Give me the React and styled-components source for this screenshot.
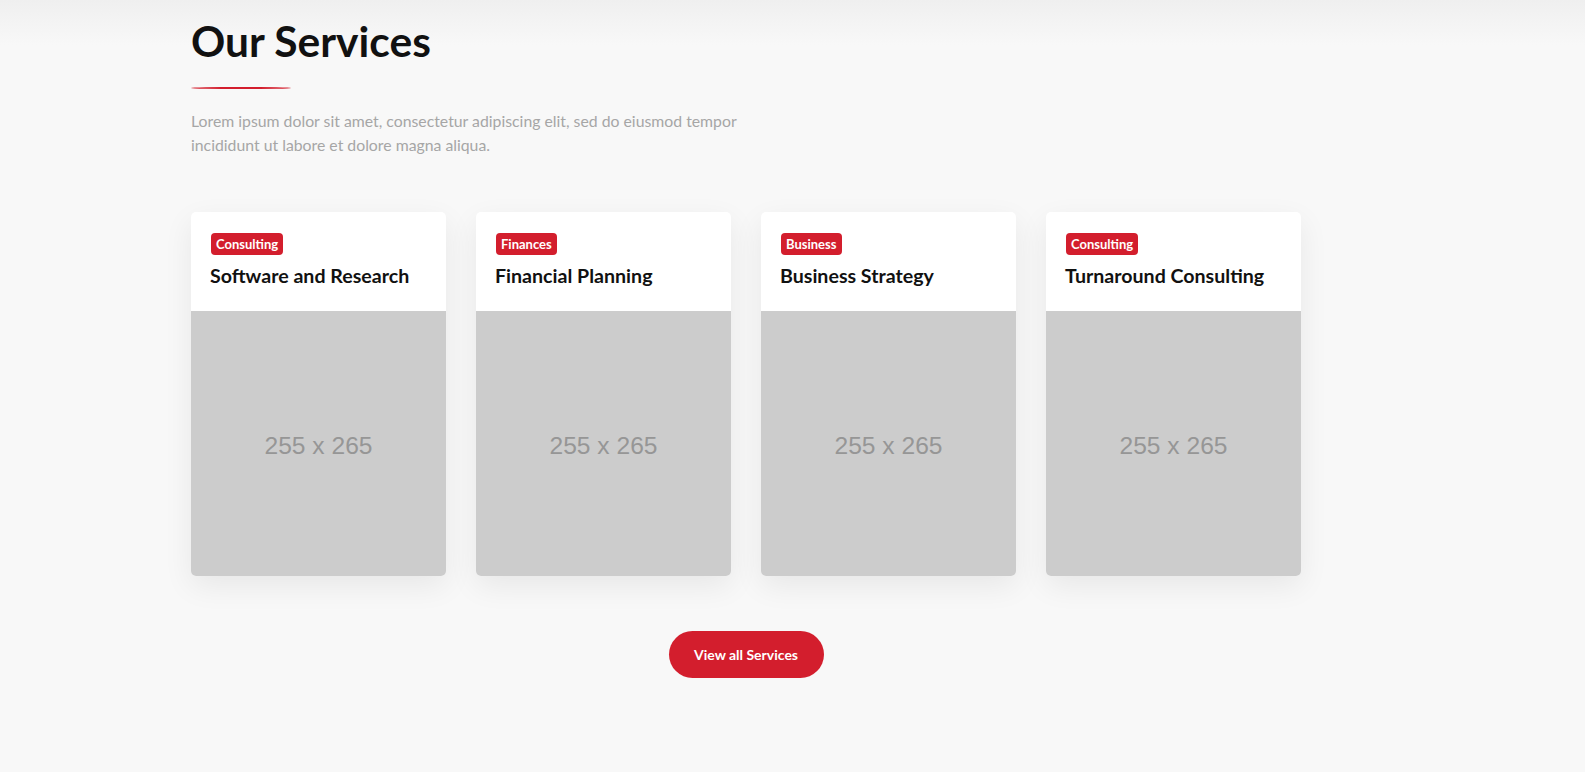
import React from "react";
import styled, { createGlobalStyle } from "styled-components";

const GlobalStyle = createGlobalStyle`
  * {
    box-sizing: border-box;
  }
  html,
  body {
    margin: 0;
    padding: 0;
  }
  body {
    min-height: 772px;
    background: linear-gradient(to bottom, #efefef 0px, #f8f8f8 45px, #f8f8f8 100%);
    font-family: "Lato", "Noto Sans", sans-serif;
    color: #111;
  }
`;

const Section = styled.section`
  padding: 15px 0 80px;
`;

const Container = styled.div`
  width: 1140px;
  margin-left: 176px;
  padding: 0 15px;
`;

const Title = styled.h2`
  margin: 0;
  font-size: 42.5px;
  line-height: 52px;
  font-weight: 700;
  color: #111;
`;

const Underline = styled.span`
  display: block;
  width: 100px;
  height: 2px;
  margin-top: 20px;
  background: #d31e2d;
  border-radius: 50%;
`;

const Lead = styled.p`
  margin: 20px 0 0;
  max-width: 580px;
  font-size: 15.8px;
  line-height: 24px;
  color: #a6a6a6;
`;

const Grid = styled.div`
  display: grid;
  grid-template-columns: repeat(4, 255px);
  gap: 30px;
  margin-top: 55px;
`;

const Card = styled.article`
  background: #fff;
  border-radius: 5px;
  overflow: hidden;
  box-shadow: 0 10px 30px rgba(0, 0, 0, 0.07);
`;

const CardHead = styled.div`
  display: flex;
  flex-direction: column;
  align-items: flex-start;
  gap: 8px;
  height: 99px;
  padding: 21px 20px 0 19px;
`;

const Badge = styled.span`
  display: inline-flex;
  align-items: center;
  height: 22px;
  margin-left: 1px;
  padding: 0 5px;
  border-radius: 4px;
  background: #d31e2d;
  color: #fff;
  font-size: 13px;
  font-weight: 700;
`;

const CardTitle = styled.h3`
  margin: 0;
  font-size: 19.6px;
  line-height: 26px;
  font-weight: 700;
  color: #111;
`;

const Placeholder = styled.div`
  display: flex;
  align-items: center;
  justify-content: center;
  height: 265px;
  background: #cccccc;
  color: #969696;
  font-family: "Liberation Sans", Arial, sans-serif;
  font-size: 24.6px;
  padding-top: 4px;
`;

const Actions = styled.div`
  display: flex;
  justify-content: center;
  margin-top: 55px;
`;

const Button = styled.a`
  display: inline-flex;
  align-items: center;
  justify-content: center;
  width: 155px;
  height: 47px;
  border-radius: 24px;
  background: #d31e2d;
  color: #fff;
  font-size: 14px;
  font-weight: 700;
  text-decoration: none;
  cursor: pointer;
`;

const services = [
  { tag: "Consulting", title: "Software and Research" },
  { tag: "Finances", title: "Financial Planning" },
  { tag: "Business", title: "Business Strategy" },
  { tag: "Consulting", title: "Turnaround Consulting" },
];

export default function App() {
  return (
    <>
      <GlobalStyle />
      <Section>
        <Container>
          <Title>Our Services</Title>
          <Underline />
          <Lead>
            Lorem ipsum dolor sit amet, consectetur adipiscing elit, sed do
            eiusmod tempor incididunt ut labore et dolore magna aliqua.
          </Lead>
          <Grid>
            {services.map((s) => (
              <Card key={s.title}>
                <CardHead>
                  <Badge>{s.tag}</Badge>
                  <CardTitle>{s.title}</CardTitle>
                </CardHead>
                <Placeholder>255 x 265</Placeholder>
              </Card>
            ))}
          </Grid>
          <Actions>
            <Button>View all Services</Button>
          </Actions>
        </Container>
      </Section>
    </>
  );
}
